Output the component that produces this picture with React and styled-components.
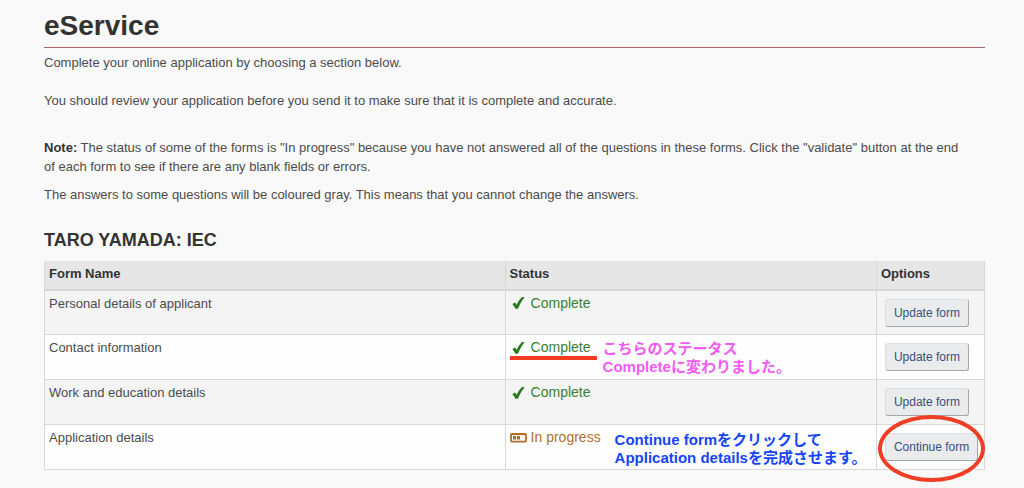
import React from 'react';
import styled, { createGlobalStyle } from 'styled-components';

const GlobalStyle = createGlobalStyle`
  * {
    box-sizing: border-box;
  }

  body {
    margin: 0;
    background: #f9f9f9;
    color: #4c4c4c;
    font-family: "Liberation Sans", Arial, sans-serif;
    font-size: 13px;
    line-height: 19px;
  }
`;

const Page = styled.main`
  padding: 8px 39px 16px 44px;
`;

const Title = styled.h1`
  margin: 0 0 5px;
  padding-bottom: 3px;
  border-bottom: 1px solid #a5656b;
  color: #333;
  font-size: 28px;
  line-height: 36px;
`;

const Text = styled.p`
  margin: 0 0 ${props => props.$gap}px;
  padding-right: 16px;
`;

const Strong = styled.strong`
  color: #333;
`;

const Applicant = styled.h2`
  margin: 0 0 9px;
  color: #333;
  font-size: 18px;
  line-height: 24px;
`;

const Table = styled.table`
  width: 100%;
  table-layout: fixed;
  border-collapse: collapse;
`;

const HeadCell = styled.th`
  width: ${props => props.$width};
  height: 28px;
  padding: 2px 4px 5px;
  border: 1px solid #d8d8d8;
  border-top-color: #e6e6e6;
  border-bottom: 2px solid #d8d8d8;
  background: #e6e6e6;
  color: #333;
  text-align: left;
  vertical-align: top;
`;

const Row = styled.tr`
  height: 45px;
  background: #fefefe;

  &:nth-child(odd) {
    background: #f4f4f4;
  }
`;

const Cell = styled.td`
  position: relative;
  padding: 3px 4px;
  border: 1px solid #d8d8d8;
  vertical-align: top;
`;

const OptionCell = styled(Cell)`
  padding: 8px 8px 7px;
`;

const Status = styled.span`
  display: flex;
  align-items: center;
  gap: 4px;
  color: ${props => (props.$done ? '#3b8031' : '#b2702e')};
  font-size: 14px;
`;

const FormButton = styled.button`
  display: block;
  height: 28px;
  padding: 0 8px;
  border: 1px solid #dcdee1;
  border-right-color: #a5a7aa;
  border-bottom-color: #a5a7aa;
  border-radius: 3px;
  background: #eaebed;
  color: #3b5078;
  font-family: inherit;
  font-size: 12px;
  line-height: 18px;
  white-space: nowrap;
`;

// Notes drawn over the table
const Note = styled.div`
  position: absolute;
  top: ${props => props.$top}px;
  left: ${props => props.$left}px;
  color: ${props => props.$color};
  font-family: "Liberation Sans", "Noto Sans CJK JP", sans-serif;
  font-size: 15px;
  font-weight: bold;
  line-height: 18px;
  white-space: nowrap;
`;

const Underline = styled.div`
  position: absolute;
  top: 21px;
  left: 4px;
  width: 87px;
  height: 4px;
  background: #f23c22;
`;

const Circle = styled.div`
  position: absolute;
  top: -10px;
  left: 1px;
  width: 107px;
  height: 67px;
  border: 4px solid #ee3e25;
  border-radius: 50%;
  pointer-events: none;
`;

const CheckIcon = () => (
  <svg width="17" height="14" viewBox="0 0 17 14" aria-hidden="true">
    <path d="M2.4 7.9 5 6.6 6.7 8.7C8.1 5.8 9.8 3.2 12 1.1L14.6 1.3C12 4.4 9.7 8.4 8.1 12.5L5.7 13Z" fill="#277b1d" />
  </svg>
);

const ProgressIcon = () => (
  <svg width="17" height="14" viewBox="0 0 17 14" aria-hidden="true">
    <rect x="1" y="3" width="15" height="7.6" rx="0.8" fill="#fff8ef" stroke="#b26d29" strokeWidth="1.8" />
    <path d="M3 5h3v3.6H3zM7 5h3v3.6H7z" fill="#b26d29" />
  </svg>
);

const forms = [
  { id: 1, name: 'Personal details of applicant', done: true },
  {
    id: 2,
    name: 'Contact information',
    done: true,
    underline: true,
    note: { top: 5, left: 97, color: '#f05cf5', lines: ['こちらのステータス', 'Completeに変わりました。'] },
  },
  { id: 3, name: 'Work and education details', done: true },
  {
    id: 4,
    name: 'Application details',
    done: false,
    note: { top: 6, left: 109, color: '#1645f5', lines: ['Continue formをクリックして', 'Application detailsを完成させます。'] },
  },
];

const FormRow = ({ form }) => (
  <Row>
    <Cell>{form.name}</Cell>
    <Cell>
      <Status $done={form.done}>
        {form.done ? <CheckIcon /> : <ProgressIcon />}
        {form.done ? 'Complete' : 'In progress'}
      </Status>
      {form.underline && <Underline />}
      {form.note && (
        <Note lang="ja" $top={form.note.top} $left={form.note.left} $color={form.note.color}>
          {form.note.lines.map(line => <div key={line}>{line}</div>)}
        </Note>
      )}
    </Cell>
    <OptionCell>
      <FormButton type="button">{form.done ? 'Update form' : 'Continue form'}</FormButton>
      {!form.done && <Circle />}
    </OptionCell>
  </Row>
);

function App() {
  return (
    <Page>
      <GlobalStyle />
      <Title>eService</Title>
      <Text $gap={19}>Complete your online application by choosing a section below.</Text>
      <Text $gap={28}>You should review your application before you send it to make sure that it is complete and accurate.</Text>
      <Text $gap={9}>
        <Strong>Note:</Strong> The status of some of the forms is "In progress" because you have not answered all of the questions in these forms. Click the "validate" button at the end of each form to see if there are any blank fields or errors.
      </Text>
      <Text $gap={24}>The answers to some questions will be coloured gray. This means that you cannot change the answers.</Text>
      <Applicant>TARO YAMADA: IEC</Applicant>
      <Table>
        <thead>
          <tr>
            <HeadCell $width="49%">Form Name</HeadCell>
            <HeadCell $width="39.5%">Status</HeadCell>
            <HeadCell $width="11.5%">Options</HeadCell>
          </tr>
        </thead>
        <tbody>
          {forms.map(form => <FormRow key={form.id} form={form} />)}
        </tbody>
      </Table>
    </Page>
  );
}

export default App;
